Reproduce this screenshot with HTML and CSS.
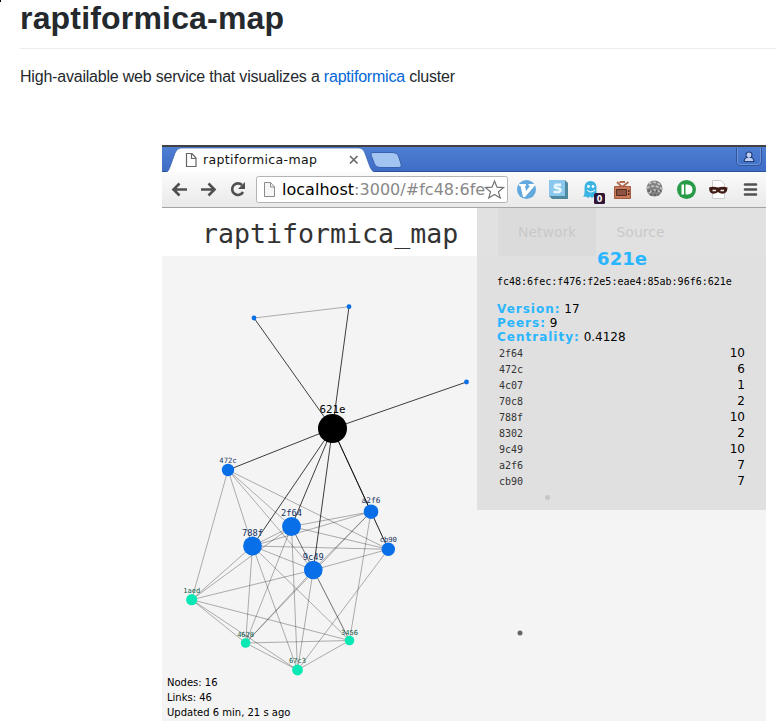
FILE: index.html
```html
<!DOCTYPE html>
<html lang="en">
<head>
<meta charset="utf-8">
<title>raptiformica-map</title>
<link rel="stylesheet" href="styles.css">
</head>
<body>
<span class="caret"></span>
<main class="readme">
  <h1>raptiformica-map</h1>
  <p class="intro">High-available web service that visualizes a <a>raptiformica</a> cluster</p>
  <section class="browser">
    <header class="chrome">
      <svg width="604" height="63" viewBox="162 145 604 63">
        <defs>
          <linearGradient id="blue" x2="0" y2="1"><stop stop-color="#4f80d3"/><stop offset="1" stop-color="#3e6cc6"/></linearGradient>
          <linearGradient id="bar" x2="0" y2="1"><stop stop-color="#fbfbfb"/><stop offset="1" stop-color="#e9e9e9"/></linearGradient>
          <clipPath id="url"><path d="M280 178H485V202H280Z"/></clipPath>
        </defs>
        <path fill="url(#blue)" d="M162 145H766V172H162Z"/>
        <path fill="#414141" d="M162 145H766V147H162Z"/>
        <path fill="#2c529b" d="M162 171H766V172H162Z"/>
        <path fill="url(#bar)" d="M162 172H766V208H162Z"/>
        <path fill="#fff" stroke="#315ca9" stroke-width=".7" d="M163 172.500C169 172 168 171 170 167L175 153Q177 148 181 148H359Q363 148 364.500 152L370 167Q372 172 376 172.500"/>
        <path fill="#fbfbfb" d="M162 172H378V175H162Z"/>
        <path fill="#a3c4f0" stroke="#3561ae" d="M373 152.500H393Q397 152.500 398.500 156L401 164Q402 167.500 398 167.500H380Q376 167.500 374.500 164L371 155Q370.500 152.500 373 152.500Z"/>
        <path fill="#fff" stroke="#666" stroke-width="1.200" d="M186.500 153.500H192L196 158V166.500H186.500ZM191.500 153.500V158.500H196"/>
        <text class="tab-title" x="203" y="164" textLength="114">raptiformica-map</text>
        <path stroke="#6b6b6b" stroke-width="1.700" d="M350 156L357.500 163.500M357.500 156L350 163.500"/>
        <g fill="none" stroke="#2e549e"><path d="M736.500 148V162Q736.500 165.500 740 165.500H757Q761.500 165.500 761.500 161V148"/><path stroke="#7096da" d="M737.500 148V162Q737.500 164.500 740 164.500H757Q760.500 164.500 760.500 161V148"/></g>
        <path fill="#bfd0f1" stroke="#233f7a" stroke-width="1.200" d="M749 152C752.800 152 752.500 156.500 750.800 157.500Q753.800 158 753.800 161.500H744.200Q744.200 158 747.200 157.500C745.500 156.500 745.200 152 749 152Z"/>
        <g fill="none" stroke="#505050" stroke-width="2.600"><path d="M187 189.500H173.500M179.500 183.500L173.500 189.500L179.500 195.500M201 189.500H214.500M208.500 183.500L214.500 189.500L208.500 195.500"/><path d="M242 185A5.800 5.800 0 1 0 243 192"/></g>
        <path fill="#505050" d="M245 182V189H238Z"/>
        <rect x="256.500" y="176.500" width="251" height="26" rx="2" fill="#fff" stroke="#b4b4b4"/>
        <path fill="#f7f7f7" stroke="#8a8a8a" d="M264.500 182.500H270.500L274.500 187V196.500H264.500ZM270.500 182.500V187H274.500"/>
        <g clip-path="url(#url)"><text class="address" x="282" y="195" textLength="212">localhost<tspan fill="#888">:3000/#fc48:6fec</tspan></text></g>
        <path fill="#fff" stroke="#727272" stroke-width="1.200" d="M494.500 181L497 187.200L503.500 187.600L498.500 191.800L500.200 198L494.500 194.500L488.800 198L490.500 191.800L485.500 187.600L492 187.200Z"/>
        <circle cx="526.500" cy="189.500" r="9.500" fill="#63a9de"/><path fill="#fff" d="M519 184H526V186H525L526 191L530 186L528.500 185.500V184H535V185.500L525 197H523L520.500 186H519Z"/>
        <path fill="#4f899f" d="M549 180H565L568 183V199H552L549 196Z"/><path fill="#8bc7ec" d="M549 180H565V196H549Z"/><path fill="none" stroke="#e7f7fd" stroke-width="2.700" d="M561 184.800H556Q553.500 187 556.500 188L559 188.500Q562 190 559 192H553.500"/>
        <path fill="#39b4e3" d="M583 197Q585 195 584.500 187Q585 181 590.500 181Q596 181 596.500 187Q596 195 598 197L594 196.500L592 198L590 196.500L588 198L586 196.500Z"/><circle cx="588.500" cy="186.500" r="1.400" fill="#fff"/><circle cx="593" cy="186.500" r="1.400" fill="#fff"/><path fill="none" stroke="#fff" d="M587 190Q591 194 595 190"/>
        <rect x="594" y="193" width="11" height="11" rx="1.500" fill="#301536"/><text class="count" x="599.500" y="202" text-anchor="middle">0</text>
        <path fill="none" stroke="#b26b50" stroke-width="1.800" d="M617 182L622 187L628.500 182M619.500 182H625"/><path fill="#cb795b" stroke="#a35d45" d="M614.500 186.500H630.500V198.500H614.500Z"/><path fill="#8d5240" stroke="#512d25" d="M616.500 189.500H626.500V195.500H616.500Z"/><path fill="#512d25" d="M628 190H629.500V192H628ZM628 193H629.500V195H628Z"/>
        <circle cx="654.500" cy="188.500" r="8" fill="#808080"/><path fill="none" stroke="#c5c5c5" stroke-width="1.700" stroke-dasharray="3 1.500" d="M649 184Q654 180 660 185M647 188Q654 184 662 189M649 193Q655 187 661 193"/><path stroke="#484848" stroke-dasharray="2 2" d="M648 191H661M650 195H659"/>
        <circle cx="686.500" cy="189.500" r="9.500" fill="#279b45"/><path fill="#fff" d="M681.500 184.500H684V194.500H681.500ZM685.500 184.500H687.500Q692.500 185 692.500 189.500T687.500 194.500H685.500Z"/>
        <path fill="#fff" stroke="#ccc" d="M712.500 180.500H721L724.500 184V198.500H712.500Z"/><path fill="#421d15" d="M709 187.500Q713 186 718 187.500Q723 186 727.500 187.500L727 191Q725 195 719.500 193L718 192L716.500 193Q711 195 709.500 191Z"/><path stroke="#eee" stroke-width="1.500" d="M712.500 190.500H716M720.500 190.500H724"/>
        <path stroke="#515151" stroke-width="2.600" stroke-linecap="round" d="M745 184.500H756M745 189.500H756M745 194.500H756"/>
        <path fill="#a5a5a5" d="M162 207H766V208H162Z"/>
      </svg>
    </header>
    <div class="page">
      <h2>raptiformica_map</h2>
      <svg class="graph" width="604" height="465" viewBox="162 256 604 465">
        <g class="links">
          <path d="M254 318L349 306.700"/>
          <path d="M228 470L191.700 599.700"/><path d="M228 470L252.500 546"/><path d="M228 470L291.500 526.500"/><path d="M228 470L313.300 570"/><path d="M228 470L388.300 549.300"/>
          <path d="M252.500 546L291.500 526.500"/><path d="M252.500 546L313.300 570"/><path d="M291.500 526.500L313.300 570"/>
          <path d="M371 511.700L252.500 546"/><path d="M371 511.700L291.500 526.500"/><path d="M371 511.700L313.300 570"/><path d="M371 511.700L388.300 549.300"/><path d="M371 511.700L245.600 643"/><path d="M371 511.700L349.500 640.500"/>
          <path d="M388.300 549.300L252.500 546"/><path d="M388.300 549.300L291.500 526.500"/><path d="M388.300 549.300L313.300 570"/><path d="M388.300 549.300L297.500 670"/>
          <path d="M252.500 546L191.700 599.700"/><path d="M252.500 546L245.600 643"/><path d="M252.500 546L297.500 670"/><path d="M252.500 546L349.500 640.500"/>
          <path d="M291.500 526.500L191.700 599.700"/><path d="M291.500 526.500L245.600 643"/><path d="M291.500 526.500L297.500 670"/><path d="M291.500 526.500L349.500 640.500"/>
          <path d="M313.300 570L191.700 599.700"/><path d="M313.300 570L245.600 643"/><path d="M313.300 570L297.500 670"/><path d="M313.300 570L349.500 640.500"/>
          <path d="M191.700 599.700L245.600 643"/><path d="M191.700 599.700L297.500 670"/><path d="M191.700 599.700L349.500 640.500"/>
          <path d="M245.600 643L297.500 670"/><path d="M245.600 643L349.500 640.500"/><path d="M297.500 670L349.500 640.500"/>
        </g>
        <g class="links active">
          <path d="M332.500 428.500L254 318"/><path d="M332.500 428.500L349 306.700"/><path d="M332.500 428.500L466.500 382"/><path d="M332.500 428.500L228 470"/><path d="M332.500 428.500L252.500 546"/><path d="M332.500 428.500L291.500 526.500"/><path d="M332.500 428.500L313.300 570"/><path d="M332.500 428.500L371 511.700"/><path d="M332.500 428.500L388.300 549.300"/>
        </g>
        <circle cx="332.500" cy="428.500" r="14.500"/>
        <g fill="#086fe8"><circle cx="254" cy="318" r="2.400"/><circle cx="349" cy="306.700" r="2.400"/><circle cx="466.500" cy="382" r="2.400"/><circle cx="228" cy="470" r="6.200"/><circle cx="291.500" cy="526.500" r="9.400"/><circle cx="252.500" cy="546" r="9.400"/><circle cx="371" cy="511.700" r="7.300"/><circle cx="388.300" cy="549.300" r="6.700"/><circle cx="313.300" cy="570" r="9.300"/></g>
        <g fill="#08e8b5"><circle cx="191.700" cy="599.700" r="5.600"/><circle cx="245.600" cy="643" r="4.800"/><circle cx="297.500" cy="670" r="5.400"/><circle cx="349.500" cy="640.500" r="4.800"/></g>
        <circle cx="520" cy="633" r="2.500" fill="#666"/>
        <g class="labels">
          <text class="main" x="332.500" y="413">621e</text>
          <text class="small" x="228" y="463">472c</text>
          <text class="large" x="291.500" y="516">2f64</text>
          <text class="large" x="252.500" y="536">788f</text>
          <text class="medium" x="371" y="503">a2f6</text>
          <text class="small" x="388.300" y="542">cb90</text>
          <text class="large" x="313.300" y="560">9c49</text>
          <g class="far"><text x="191.700" y="593">1aed</text><text x="245.600" y="637">4628</text><text x="297.500" y="663">67c3</text><text x="349.500" y="635">3456</text></g>
        </g>
      </svg>
      <div class="stats">Nodes: 16<br>Links: 46<br>Updated 6 min, 21 s ago</div>
      <aside class="panel">
        <nav><span class="selected">Network</span><span>Source</span></nav>
        <h3>621e</h3>
        <div class="ip">fc48:6fec:f476:f2e5:eae4:85ab:96f6:621e</div>
        <div class="facts"><div><b>Version:</b> 17</div><div><b>Peers:</b> 9</div><div><b>Centrality:</b> 0.4128</div></div>
        <ul>
          <li><code>2f64</code>10</li><li><code>472c</code>6</li><li><code>4c07</code>1</li><li><code>70c8</code>2</li><li><code>788f</code>10</li><li><code>8302</code>2</li><li><code>9c49</code>10</li><li><code>a2f6</code>7</li><li><code>cb90</code>7</li>
        </ul>
        <i class="ghost"></i>
      </aside>
    </div>
  </section>
</main>
</body>
</html>
```
FILE: styles.css
```css
* { box-sizing: border-box; }
body { margin: 0; height: 722px; overflow: hidden; background: #fff; color: #24292e; font-family: "Liberation Sans", sans-serif; }
svg { display: block; }
.caret { position: absolute; left: 0; top: 0; width: 1px; height: 2px; background: #000; }
.readme { padding-left: 20px; }
h1 { margin: 0; height: 49px; border-bottom: 1px solid #eaecef; font-size: 32px; line-height: 36px; font-weight: bold; letter-spacing: .18px; }
.intro { margin: 16px 0 0; height: 80px; font-size: 16px; line-height: 24px; letter-spacing: -.205px; white-space: nowrap; }
.intro a { color: #0366d6; }
.browser { margin-left: 142px; width: 604px; height: 576px; overflow: hidden; font-family: "DejaVu Sans", sans-serif; }
.tab-title { font-size: 12.500px; fill: #111; }
.address { font-size: 16px; fill: #000; }
.count { font-size: 8px; font-weight: bold; fill: #fff; }
.page { position: relative; height: 513px; background: #f4f4f4; }
h2 { margin: 0; height: 48px; padding-left: 40px; background: #fff; color: #333; font: 26.600px/51px "DejaVu Sans Mono", monospace; }
.links { fill: none; stroke: #000; stroke-width: 1; stroke-opacity: .3; }
.links.active { stroke-opacity: .75; }
.labels { font-family: "DejaVu Sans Mono", monospace; text-anchor: middle; fill: #14335f; }
.labels .main { font-size: 10.800px; fill: #000; }
.labels .large { font-size: 8.700px; }
.labels .medium { font-size: 7.800px; }
.labels .small { font-size: 7.200px; }
.labels .far { font-size: 7px; fill: #13594a; }
.stats { position: absolute; left: 5px; bottom: 1px; font-size: 10px; line-height: 15px; color: #000; }
.panel { position: absolute; left: 315px; top: 0; width: 289px; height: 302px; padding: 0 20px; background: rgba(222, 222, 222, .9); color: #000; font-size: 12px; }
nav { display: flex; height: 48px; padding-left: 1px; font-size: 14px; line-height: 48px; color: #c9c9c9; }
nav span { padding: 0 20px; }
nav .selected { background: #dbdbdb; }
h3 { margin: -6px 0 0 1px; height: 18px; line-height: 18px; font-size: 18px; text-align: center; color: #29b6ff; }
.ip { height: 14px; margin-top: 7px; font: 10px/14px "DejaVu Sans Mono", monospace; white-space: nowrap; }
.facts { margin-top: 13px; line-height: 14px; }
.facts b { color: #29b6ff; letter-spacing: 1px; }
ul { margin: 1px 0 0; padding: 0 1px 0 2px; list-style: none; }
li { display: flex; justify-content: space-between; height: 16px; line-height: 16px; }
code { color: #333; font: 10px/18px "DejaVu Sans Mono", monospace; }
.ghost { position: absolute; left: 68px; top: 287px; width: 5px; height: 5px; border-radius: 50%; background: #c5c5c5; }
```
